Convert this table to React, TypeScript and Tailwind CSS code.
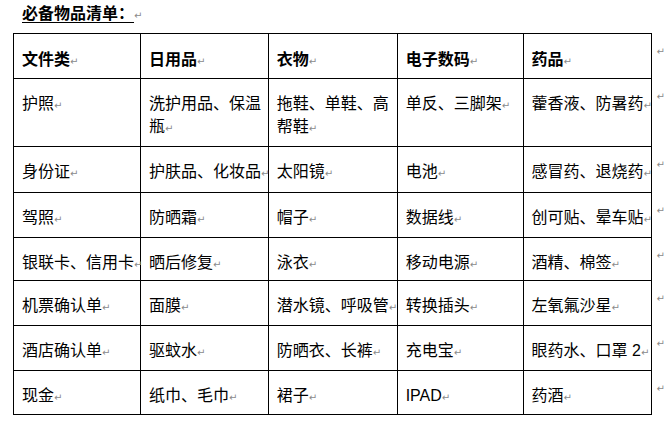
import React from 'react'

const headers = ['文件类', '日用品', '衣物', '电子数码', '药品']

const rows: { h: string; cells: string[] }[] = [
  { h: 'h-[68px]', cells: ['护照', '洗护用品、保温瓶', '拖鞋、单鞋、高帮鞋', '单反、三脚架', '藿香液、防暑药'] },
  { h: 'h-[46px]', cells: ['身份证', '护肤品、化妆品', '太阳镜', '电池', '感冒药、退烧药'] },
  { h: 'h-[45px]', cells: ['驾照', '防晒霜', '帽子', '数据线', '创可贴、晕车贴'] },
  { h: 'h-[43px]', cells: ['银联卡、信用卡', '晒后修复', '泳衣', '移动电源', '酒精、棉签'] },
  { h: 'h-[45px]', cells: ['机票确认单', '面膜', '潜水镜、呼吸管', '转换插头', '左氧氟沙星'] },
  { h: 'h-[45px]', cells: ['酒店确认单', '驱蚊水', '防晒衣、长裤', '充电宝', '眼药水、口罩 2'] },
  { h: 'h-[44px]', cells: ['现金', '纸巾、毛巾', '裙子', 'IPAD', '药酒'] },
]

const widths = ['w-[127px]', 'w-[128px]', 'w-[129px]', 'w-[126px]', 'w-[129px]']

function Mark() {
  return (
    <span className="inline-block w-0 whitespace-nowrap align-baseline text-[10px] leading-none text-[#8a8a8a] font-['DejaVu_Sans',sans-serif] font-normal">
      ↵
    </span>
  )
}

export default function App() {
  return (
    <div className="w-[667px] h-[429px] bg-white text-black font-['Liberation_Sans','Noto_Sans_CJK_SC',sans-serif] text-[16px] leading-[23px]">
      <div className="h-[33px] pl-[22px] pt-[2px]">
        <span className="font-bold underline underline-offset-[3px]">必备物品清单：</span>
        <Mark />
      </div>
      <table className="ml-[13px] border-collapse table-fixed">
        <colgroup>
          {widths.map((w, i) => (
            <col key={i} className={w} />
          ))}
          <col className="w-[15px]" />
        </colgroup>
        <tbody>
          <tr className="h-[45px]">
            {headers.map((t) => (
              <td key={t} className="border border-black align-top pl-[8px] pr-[2px] pt-[14px] font-bold">
                {t}
                <Mark />
              </td>
            ))}
            <td className="align-top pl-[4px] pt-[4px]">
              <Mark />
            </td>
          </tr>
          {rows.map((r, i) => (
            <tr key={i} className={r.h}>
              {r.cells.map((t, j) => (
                <td key={j} className="border border-black align-top pl-[8px] pr-[2px] pt-[13px]">
                  {t}
                  <Mark />
                </td>
              ))}
              <td className="align-top pl-[4px] pt-[4px]">
                <Mark />
              </td>
            </tr>
          ))}
        </tbody>
      </table>
    </div>
  )
}
